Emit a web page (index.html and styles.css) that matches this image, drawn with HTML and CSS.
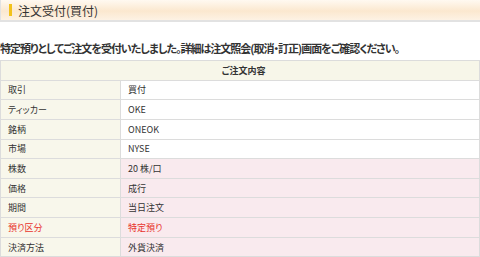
FILE: index.html
```html
<!DOCTYPE html>
<html lang="ja">
<head>
<meta charset="utf-8">
<link rel="stylesheet" href="styles.css">
</head>
<body>
<div class="title-bar"><span class="title-mark"></span><h1 class="title">注文受付(買付)</h1></div>
<p class="message">特定預りとしてご注文を受付いたしました。詳細は注文照会(取消・訂正)画面をご確認ください。</p>
<table class="order">
  <tr><th class="order-head" colspan="2">ご注文内容</th></tr>
  <tr><td class="label">取引</td><td class="value">買付</td></tr>
  <tr><td class="label">ティッカー</td><td class="value">OKE</td></tr>
  <tr><td class="label">銘柄</td><td class="value">ONEOK</td></tr>
  <tr><td class="label">市場</td><td class="value">NYSE</td></tr>
  <tr><td class="label">株数</td><td class="value pink">20 株/口</td></tr>
  <tr><td class="label">価格</td><td class="value pink">成行</td></tr>
  <tr><td class="label">期間</td><td class="value pink">当日注文</td></tr>
  <tr><td class="label red">預り区分</td><td class="value pink red">特定預り</td></tr>
  <tr><td class="label">決済方法</td><td class="value pink">外貨決済</td></tr>
</table>
</body>
</html>
```

FILE: styles.css
```css
html, body {
  margin: 0;
  padding: 0;
  background: #fff;
}
body {
  font-family: "Noto Sans CJK JP", "Liberation Sans", sans-serif;
  color: #333;
  font-feature-settings: "palt";
}
.title-bar {
  height: 22px;
  box-sizing: border-box;
  border-left: 1px solid #e2e2e2;
  border-bottom: 2px solid #e2e2e2;
  background: linear-gradient(#fff9f1 0%, #fbe8cf 55%, #fdf2e4 100%);
  display: flex;
  align-items: center;
  padding-left: 8px;
}
.title-mark {
  width: 3px;
  height: 12px;
  background: #f2c21c;
  margin-right: 6px;
}
.title {
  margin: 0;
  font-size: 12px;
  font-weight: normal;
  color: #333;
}
.message {
  margin: 18px 0 0 0;
  font-size: 11px;
  letter-spacing: -1px;
  font-weight: bold;
  line-height: 16px;
  color: #333;
}
.order {
  width: 100%;
  margin-top: 4px;
  border-collapse: collapse;
  font-size: 9px;
}
.order th, .order td {
  border: 1px solid #dcdcdc;
  height: 18.65px;
  padding: 0 0 0 7px;
  text-align: left;
}
.order-head {
  background: #f7f6e9;
  text-align: center !important;
  font-weight: bold;
}
.label {
  width: 112px;
  background: #f8f7eb;
}
.value {
  background: #fff;
}
.pink {
  background: #f9eaee;
}
.red {
  color: #e8342c;
}
```
